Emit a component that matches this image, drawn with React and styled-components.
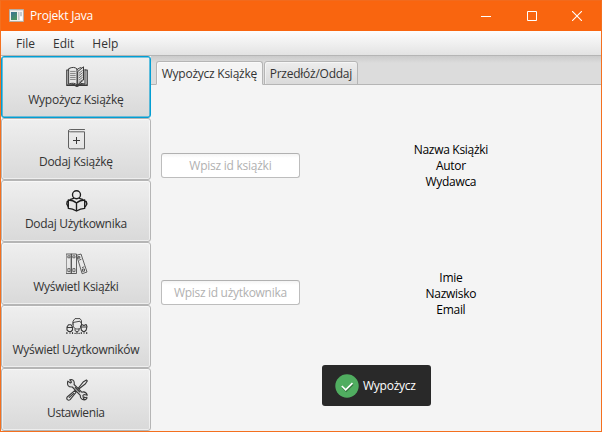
import React from "react";
import styled, { createGlobalStyle } from "styled-components";

const Global = createGlobalStyle`
  * { box-sizing: border-box; }
  body { margin: 0; background: #f4f4f4; }
  svg { display: block; flex: none; }
`;

const Window = styled.div`
  width: 602px;
  height: 432px;
  display: flex;
  flex-direction: column;
  border: 1px solid #f4701f;
  border-top-color: #f26a1c;
  background: #f4f4f4;
  font: 12px/16px "Open Sans", "Noto Sans", sans-serif;
  color: #333;
  overflow: hidden;
`;

const TitleBar = styled.header`
  height: 30px;
  flex: none;
  display: flex;
  align-items: center;
  padding-left: 8px;
  background: #f9650f;
  color: #fff;
`;

const Title = styled.span`
  flex: 1;
  margin-left: 5px;
  white-space: nowrap;
`;

const Controls = styled.div`
  display: flex;
  margin-right: 1px;
`;

const Control = styled.div`
  width: 45.5px;
  height: 28px;
  display: flex;
  align-items: center;
  justify-content: center;
`;

const MenuBar = styled.nav`
  height: 25px;
  flex: none;
  display: flex;
  align-items: center;
  padding: 2px 0 0 15px;
  gap: 18px;
  background: linear-gradient(#fdfdfd, #e3e3e3);
  border-bottom: 1px solid #b5b5b5;
`;

const Body = styled.div`
  flex: 1;
  display: flex;
  min-height: 0;
`;

const Sidebar = styled.aside`
  width: 150px;
  flex: none;
  display: flex;
  flex-direction: column;
`;

const SideButton = styled.div`
  height: ${(p) => p.$height}px;
  flex: none;
  display: flex;
  flex-direction: column;
  align-items: center;
  padding-top: ${(p) => p.$top}px;
  border: ${(p) => (p.$active ? "1px solid #039ed3" : "1px solid #b5b5b5")};
  border-radius: 3px;
  box-shadow: inset 0 0 0 ${(p) => (p.$active ? "0.6px #039ed3" : "1px rgba(255, 255, 255, 0.55)")};
  background: linear-gradient(#efefef, #d9d9d9);
`;

const IconBox = styled.div`
  height: 22px;
  margin: 0 0 4px 1px;
`;

const Label = styled.span`
  white-space: pre;
  letter-spacing: ${(p) => p.$track || 0}px;
  margin-right: ${(p) => -(p.$track || 0)}px;
`;

const Content = styled.main`
  flex: 1;
  display: flex;
  flex-direction: column;
`;

const Tabs = styled.div`
  height: 29px;
  flex: none;
  display: flex;
  align-items: flex-end;
  padding-left: 5px;
  gap: 1px;
  background: linear-gradient(#cbcbcb, #dcdcdc 7px, #dcdcdc);
  box-shadow: inset 0 -1px #b5b5b5;
`;

const Tab = styled.div`
  width: ${(p) => p.$width}px;
  height: 24px;
  display: flex;
  justify-content: center;
  padding-top: 4px;
  border: 1px solid #b5b5b5;
  border-bottom-color: ${(p) => (p.$active ? "#f4f4f4" : "#b5b5b5")};
  border-radius: 3px 3px 0 0;
  background: ${(p) => (p.$active ? "#f4f4f4" : "linear-gradient(#ededed, #dadada)")};
  box-shadow: inset 1px 1px rgba(255, 255, 255, 0.5);
`;

const Panel = styled.div`
  flex: 1;
  padding: 57px 0 0 10px;
`;

const FormRow = styled.section`
  height: ${(p) => p.$height}px;
  display: grid;
  grid-template-columns: 139px 302px;
  align-items: start;
`;

const Field = styled.div`
  height: 25px;
  margin-top: ${(p) => p.$offset}px;
  display: flex;
  align-items: center;
  justify-content: center;
  border: 1px solid #bdbdbd;
  border-top-color: #b1b1b1;
  border-radius: 3px;
  background: linear-gradient(#f4f4f4, #fff 4px);
  color: #b1b1b1;
`;

const Info = styled.div`
  display: flex;
  flex-direction: column;
  align-items: center;
  color: #000;
`;

const Submit = styled.div`
  width: 109px;
  height: 41px;
  margin-left: 161px;
  display: flex;
  align-items: center;
  padding-left: 13px;
  gap: 4px;
  border-radius: 3px;
  background: #292929;
  color: #fff;
`;

const AppIcon = () => (
  <svg width="16" height="14" viewBox="0 0 16 14">
    <defs>
      <linearGradient id="screen" x2="0.6" y2="1">
        <stop stopColor="#397397" />
        <stop offset="1" stopColor="#4b9461" />
      </linearGradient>
    </defs>
    <path fill="#f3f1ee" stroke="#b8ada3" d="M.5 .5h14v12H.5z" />
    <path fill="#d9dcdf" d="M1 1h13v1H1z" />
    <path fill="url(#screen)" d="M2 3h6v8H2z" />
    <path fill="#c3c9cc" d="M9 3h1.5v8H9zM11 3h2v4h-2z" />
    <path fill="#fff" d="M11 8h2v3h-2z" />
  </svg>
);

const Drawing = ({ children, width = 1 }) => (
  <svg width="22" height="22" viewBox="0 0 22 22" fill="none" stroke="#383838" strokeWidth={width} strokeLinejoin="round" strokeLinecap="round">
    {children}
  </svg>
);

const OpenBook = () => (
  <Drawing width={1}>
    <path d="M3 2.5Q8 0 11 3v16Q8 16 3 18zM11 3.5Q14 1.5 15 1.5M11 19Q14 16 19 18V3.5" />
    <path d="M12 5.3 17.5.8V14L12 18.5z" fill="#e4e4e4" />
    <path d="M2.5 4H.8v15.5h8l2.2 1 2-1h8.2V4h-1.8M1 19l7-.4 3 1.3 3-1.3 7 .4" strokeWidth="1.2" />
    <path d="M4.5 5.4h4.8M4.5 7.4h4.8M4.5 9.4h4.8M4.5 11.4h4.8M4.5 13.4h4.8" strokeWidth=".6" />
    <path d="m13.3 7 3-2.4m-3 4.7 3-2.4m-3 4.7 3-2.4m-3 4.7 3-2.4m-3 4.7 3-2.4" strokeWidth=".7" />
  </Drawing>
);

const AddBook = () => (
  <Drawing>
    <path d="M18.5 1.5H4.2c-2 0-2 2.3 0 2.3h14.3v17H4.3Q2.5 20.8 2.5 19V2.7" stroke="#606060" />
    <path d="M7 12.5h7M10.5 9v7" strokeLinecap="butt" />
  </Drawing>
);

const Reader = () => (
  <Drawing width={1.35}>
    <g stroke="#1c1c1c">
      <circle cx="10.5" cy="4.7" r="4" />
      <path d="M10.5 13Q7 10 2.3 10v8.3q4.2 0 8.2 2.7 4-2.7 8.2-2.7V10q-4.7 0-8.2 3zv7.5" />
      <path d="M4.5 9.3Q6.5 8.6 7.5 8.3M16.5 9.3q-2-.7-3-1M2.3 11.5H1.2L.8 14l1.3 2.5M18.7 11.5h1.5l.7 2.5-1.5 2.5" />
    </g>
  </Drawing>
);

const Binders = () => (
  <Drawing width={0.9}>
    <path d="M.5 1h5v19.5h-5zM5.5 1h5v19.5h-5zM11 2.2 15 1l6 18-4.5 1.6z" stroke="#505050" />
    <path d="M2.2 2.8H4v2H2.2zm0 12.8H4v3H2.2zM7.2 2.8H9v2H7.2zm0 12.8H9v3H7.2z" strokeWidth=".7" />
    <path d="M12.5 3.6h1.3v1.6h-1.3zM16.8 16h1.7v2.2h-1.7zM13.5 7l1.5-.6M16.4 14.5l1.6-.6" strokeWidth=".8" />
  </Drawing>
);

const People = () => (
  <Drawing width={0.9}>
    <path d="M7 8V5.2l2-2.6h5l1.5 2.1V8c0 5-2 5-4.2 5S7 12 7 8zM7 6.5l7-1.3L15.4 7.5" />
    <path d="M1 13v-2l1.5-2.3H5L6.5 11v3L5 15.5H2.7L1 14zM1.3 11.5h5M15.3 13l-.8-2.5L15.7 8.5l2.2 1 2.2-1 .9 2-.8 3.5-1.6 1.5h-1.5L15.3 14zM16 11h4" strokeWidth="1.1" />
    <path d="M9 13v1.7l2 1 2-1V13M4 16v1.5M18 16v1.5" />
    <path d="M.9 17.5v-1M6.5 17.5v-1M9 17.4h.2M11 16.2v1.4M13 17.4h.2M15.3 16.5v1M20.7 17.5v-1" strokeWidth="1.2" />
  </Drawing>
);

const Tools = () => (
  <Drawing width={1.1}>
    <path d="m12 9.5 5.5-6.8L20.4 1l.9.9-1.8 2.8L12.8 10M9 11.4 1.2 18q-1 1.3.2 2.7 1.3 1.1 2.7-.1L10 13.5zM3.3 18.4l4.5-4.1" />
    <path d="M1.8 2.1 4.5 4l1-1L3.8.8Q8-.1 8.3 4l-.2 1.5 7.7 7.7q4-1.2 5.5 3L18 15.5l-1.1 1.2.7 3.3q1.8 1.4 3.3-.7-1.5 2.5-4.8 1-2.1-1.2-1.8-4L6.3 8Q.3 8.4 1.8 2.1z" fill="#dfdfdf" />
    <path d="m18 18 .8.8 2.2-.5M9.3 8.5l4.5 4.5" />
  </Drawing>
);

const Check = () => (
  <svg width="24" height="24" viewBox="0 0 24 24">
    <circle cx="12" cy="12" r="11.7" fill="#50ad60" />
    <path d="m6.8 12.3 3.9 3.8 6.8-6.7" transform="translate(.5 1)" stroke="#34723e" strokeWidth="1.6" fill="none" />
    <path d="m6.8 12 3.9 3.8 6.8-6.7" stroke="#fff" strokeWidth="1.6" fill="none" />
  </svg>
);

const actions = [
  { text: "Wypożycz Książkę", icon: OpenBook, height: 62, top: 9, track: -0.25, active: true },
  { text: "Dodaj Książkę", icon: AddBook, height: 62, top: 9, track: -0.3 },
  { text: "Dodaj Użytkownika", icon: Reader, height: 62, top: 9, track: -0.3 },
  { text: "Wyświetl Książki", icon: Binders, height: 63, top: 10, track: -0.3 },
  { text: "Wyświetl Użytkowników", icon: People, height: 63, top: 10, track: -0.3 },
  { text: "Ustawienia", icon: Tools, height: 63, top: 10, track: -0.4 },
];

export default function App() {
  return (
    <>
      <Global />
      <Window>
        <TitleBar>
          <AppIcon />
          <Title><Label $track={-0.2}>Projekt Java</Label></Title>
          <Controls>
            <Control><svg width="10" height="10"><path d="M0 5.5h10" stroke="#fff" /></svg></Control>
            <Control><svg width="10" height="10"><path d="M.5.5h9v9h-9z" fill="none" stroke="#fff" /></svg></Control>
            <Control><svg width="10" height="10"><path d="m0 0 10 10M10 0 0 10" stroke="#fff" strokeWidth="1.1" /></svg></Control>
          </Controls>
        </TitleBar>
        <MenuBar>
          <Label>File</Label>
          <Label>Edit</Label>
          <Label>Help</Label>
        </MenuBar>
        <Body>
          <Sidebar>
            {actions.map(({ text, icon: Icon, height, top, track, active }) => (
              <SideButton key={text} $height={height} $top={top} $active={active}>
                <IconBox><Icon /></IconBox>
                <Label $track={track}>{text}</Label>
              </SideButton>
            ))}
          </Sidebar>
          <Content>
            <Tabs>
              <Tab $width={107} $active><Label $track={-0.25}>Wypożycz Książkę</Label></Tab>
              <Tab $width={94}><Label $track={-0.25}>Przedłóż/Oddaj</Label></Tab>
            </Tabs>
            <Panel>
              <FormRow $height={128}>
                <Field $offset={11}><Label $track={-0.25}>Wpisz id książki</Label></Field>
                <Info>
                  <Label $track={-0.3}>Nazwa Książki</Label>
                  <Label $track={-0.3}>Autor</Label>
                  <Label $track={-0.3}>Wydawca</Label>
                </Info>
              </FormRow>
              <FormRow $height={95}>
                <Field $offset={10}><Label $track={-0.3}>Wpisz id użytkownika</Label></Field>
                <Info>
                  <Label $track={-0.3}>Imie</Label>
                  <Label $track={-0.3}>Nazwisko</Label>
                  <Label $track={-0.3}>Email</Label>
                </Info>
              </FormRow>
              <Submit>
                <Check />
                <Label $track={-0.25}>Wypożycz</Label>
              </Submit>
            </Panel>
          </Content>
        </Body>
      </Window>
    </>
  );
}
